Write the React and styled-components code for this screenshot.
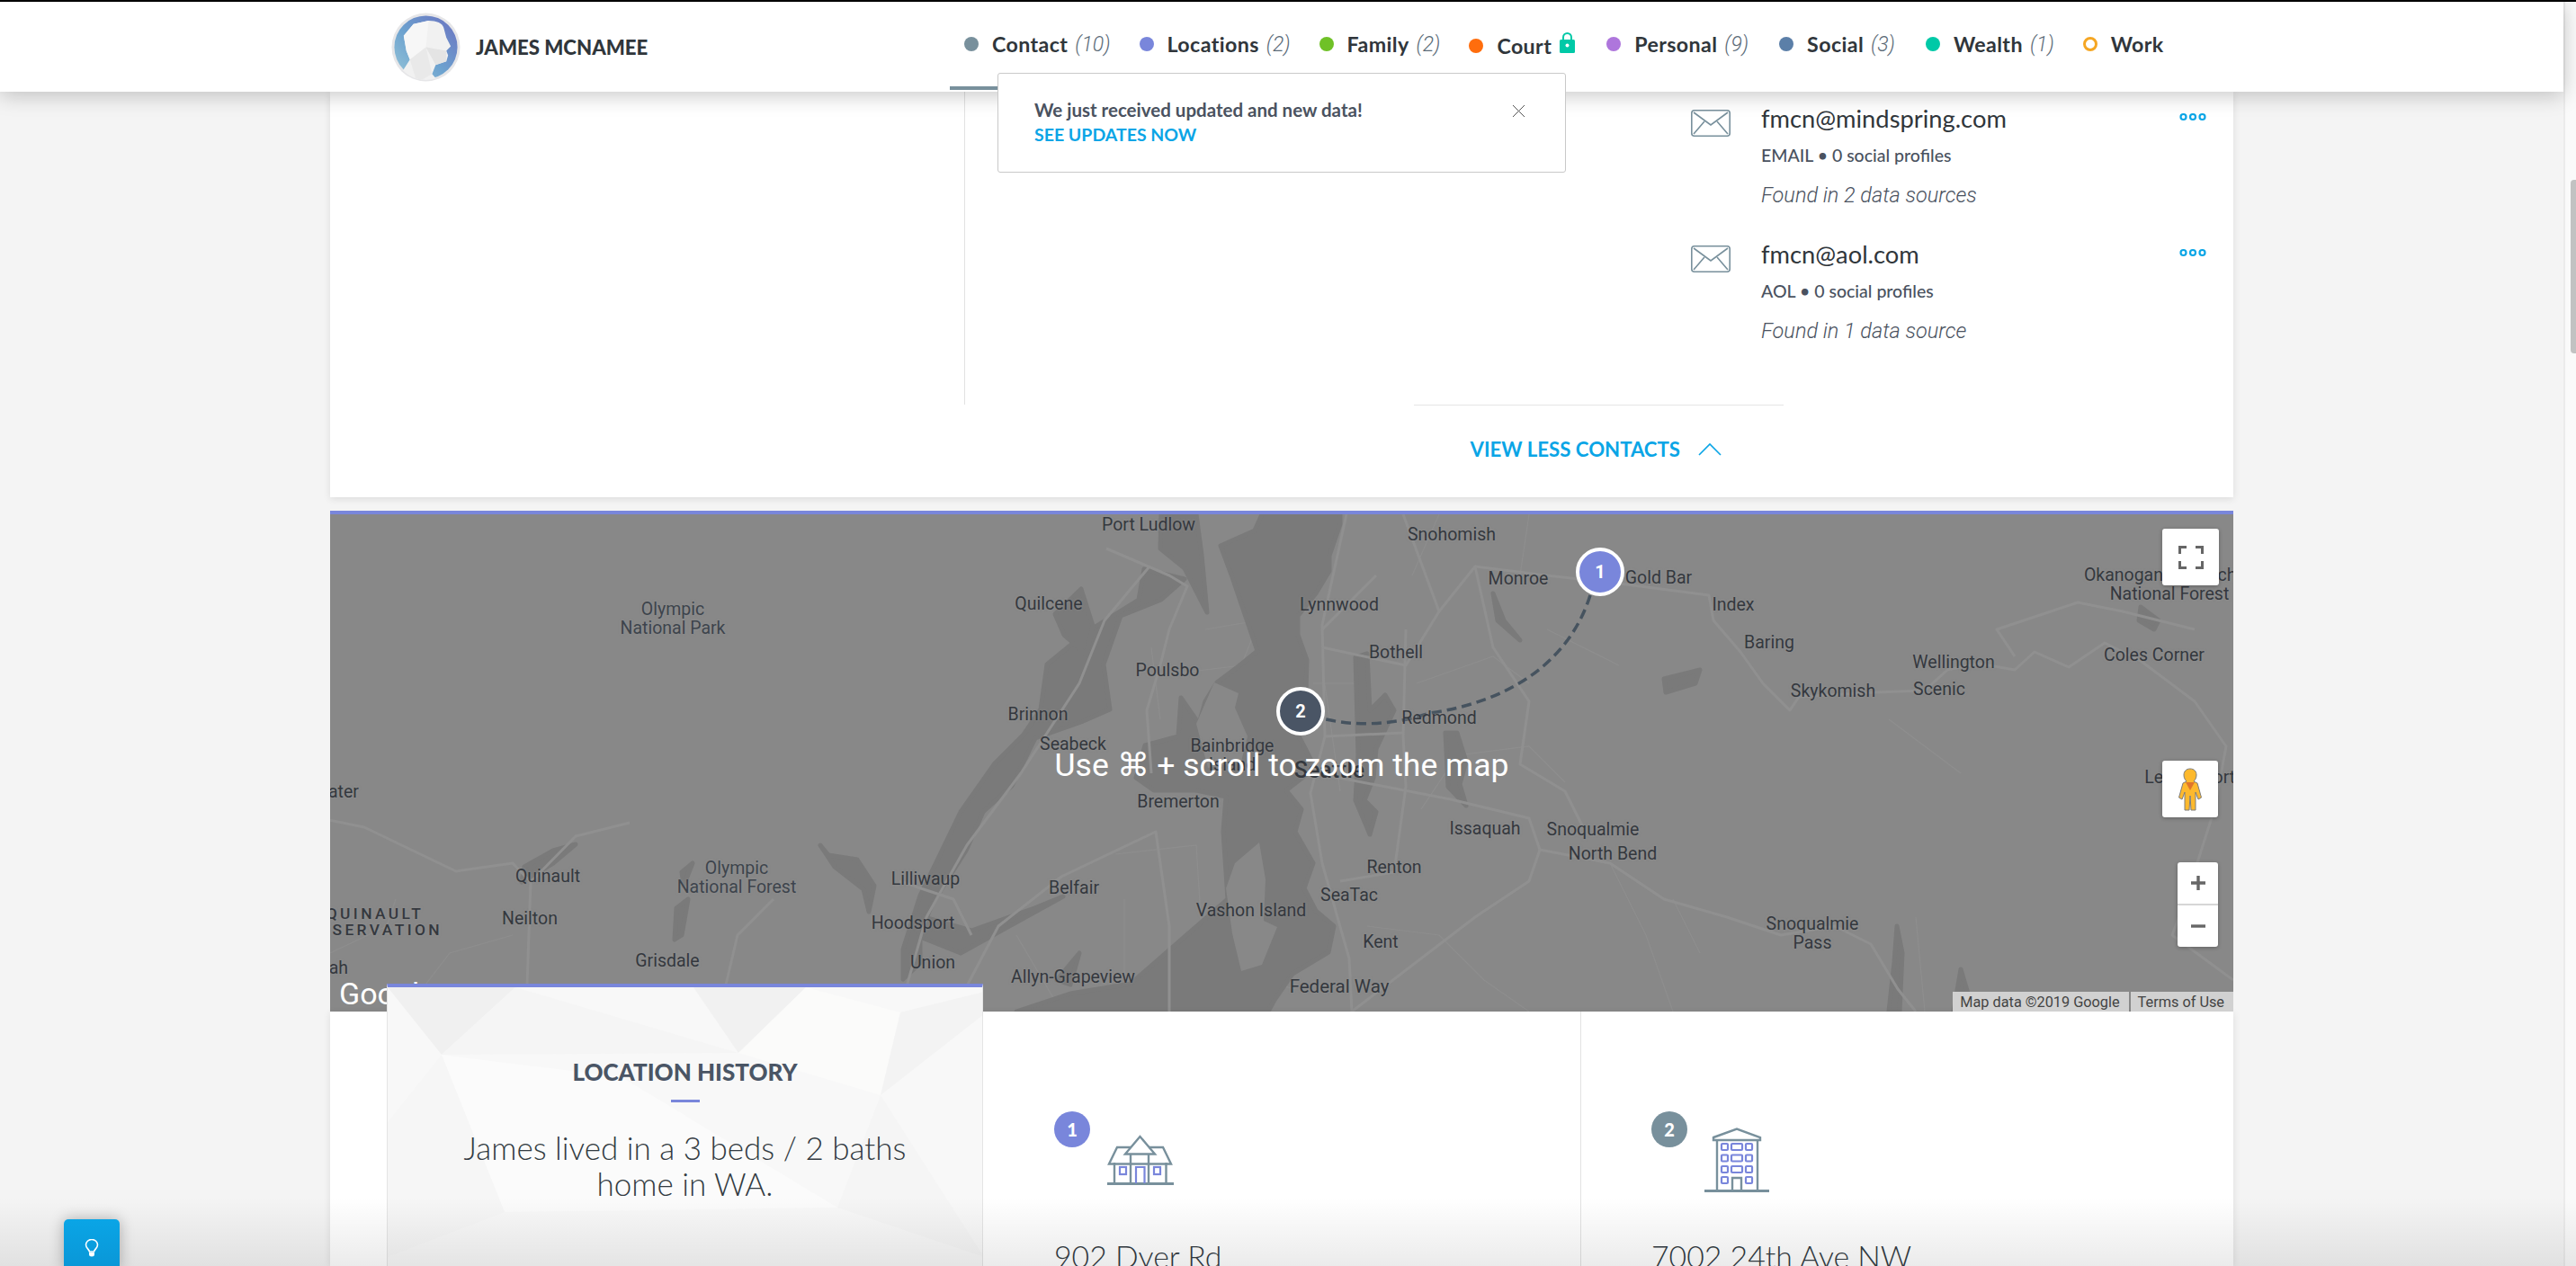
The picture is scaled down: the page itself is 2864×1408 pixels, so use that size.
import React from "react";
import styled, { createGlobalStyle } from "styled-components";

const BLUE = "#0aa5e6";
const PERI = "#7986db";
const SLATE = "#78909c";
const UI = '"Lato", "Liberation Sans", sans-serif';
const MAPF = '"Roboto", "Liberation Sans", sans-serif';
const MAP_X = 367;
const MAP_Y = 572;

const Global = createGlobalStyle`
  html, body { margin: 0; padding: 0; overflow: hidden; background: #f4f4f4; }
  * { box-sizing: border-box; }
`;

const Page = styled.div`
  position: relative;
  height: 100vh;
  display: flex;
  flex-direction: column;
  overflow: hidden;
  font-family: ${UI};
  color: #333b42;
  background: #f4f4f4;
`;
const BlackBar = styled.div`
  height: 2px;
  flex: none;
  background: #000;
`;
const Viewport = styled.div`
  flex: 1;
  min-height: 0;
  display: flex;
`;
const Main = styled.div`
  flex: 1;
  min-width: 0;
  display: flex;
  flex-direction: column;
`;
const ScrollTrack = styled.div`
  width: 14px;
  flex: none;
  background: #fafafa;
  border-left: 2px solid #ebebeb;
  padding: 198px 0 0 6px;
`;
const ScrollThumb = styled.div`
  height: 193px;
  background: #c2c2c2;
  border-radius: 4px 0 0 4px;
`;

const Header = styled.header`
  position: relative;
  z-index: 10;
  flex: none;
  height: 100px;
  display: flex;
  padding-left: 434px;
  background: #fff;
  box-shadow: 0 4px 22px rgba(0, 0, 0, 0.22);
`;
const Brand = styled.div`
  width: 622px;
  flex: none;
  display: flex;
  align-items: center;
  gap: 16px;
`;
const Name = styled.div`
  font-size: 22.2px;
  font-weight: 900;
  color: #30363b;
  white-space: nowrap;
`;
const Nav = styled.nav`
  display: flex;
  height: 98px;
`;
const NavItem = styled.div`
  display: flex;
  align-items: center;
  padding: ${(p) => (p.$low ? "4px" : "0")} 16px 0;
  margin-right: ${(p) => p.$extra || 0}px;
  border-bottom: 4px solid ${(p) => (p.$active ? SLATE : "transparent")};
  white-space: nowrap;
`;
const Dot = styled.span`
  width: 16px;
  height: 16px;
  border-radius: 50%;
  margin-right: 15px;
  flex: none;
  background: ${(p) => (p.$ring ? "transparent" : p.$color)};
  border: ${(p) => (p.$ring ? `3px solid ${p.$color}` : "0")};
`;
const NavLabel = styled.span`
  font-size: 23.2px;
  font-weight: 700;
  letter-spacing: 0.4px;
  color: #30363b;
`;
const NavCount = styled.span`
  font-family: ${MAPF};
  font-style: italic;
  font-weight: 300;
  font-size: 23px;
  color: #5b6b78;
  margin-left: 8px;
`;
const LockBox = styled.span`
  display: flex;
  margin: -8px 0 0 9px;
`;

const Toast = styled.div`
  position: absolute;
  left: 1109px;
  top: 79px;
  width: 632px;
  height: 111px;
  padding: 26px 0 0 40px;
  background: #fff;
  border: 1px solid #c9c9c9;
  border-radius: 3px;
  z-index: 12;
`;
const ToastTitle = styled.div`
  font-size: 20.5px;
  font-weight: 700;
  line-height: 28px;
  color: #4a5260;
`;
const ToastLink = styled.div`
  font-size: 19.5px;
  font-weight: 700;
  line-height: 28px;
  color: ${BLUE};
`;
const ToastClose = styled.svg`
  position: absolute;
  right: 44px;
  top: 34px;
`;

const Content = styled.div`
  flex: 1;
  min-height: 0;
  padding: 0 367px;
  display: flex;
  flex-direction: column;
`;
const ContactCard = styled.section`
  flex: none;
  height: 451px;
  margin-bottom: 15px;
  background: #fff;
  box-shadow: 0 2px 8px rgba(0, 0, 0, 0.1);
`;
const ContactBody = styled.div`
  height: 348px;
  margin-left: 705px;
  padding: 20px 30px 0 807px;
  border-left: 1px solid #e2e2e2;
`;
const EmailRow = styled.div`
  display: grid;
  grid-template-columns: 78px 1fr 30px;
  height: 151px;
`;
const EmailInfo = styled.div`
  display: flex;
  flex-direction: column;
`;
const EmailAddress = styled.div`
  font-size: 27.3px;
  font-weight: 400;
  line-height: 30px;
  margin-top: -5px;
  color: #30363b;
`;
const EmailMeta = styled.div`
  font-size: 19.5px;
  font-weight: 500;
  line-height: 24px;
  margin-top: 14px;
  color: #4a5260;
`;
const EmailSource = styled.div`
  font-family: ${MAPF};
  font-size: 23.5px;
  font-style: italic;
  font-weight: 300;
  line-height: 28px;
  margin-top: 18px;
  color: #4a5260;
`;
const MoreDots = styled.svg`
  margin-top: 3px;
`;
const CardFooter = styled.div`
  width: 411px;
  margin-left: 1205px;
  border-top: 1px solid #e6e6e6;
  padding-top: 18px;
  display: flex;
  align-items: center;
  justify-content: flex-end;
  padding-right: 69px;
  gap: 20px;
  height: 80px;
`;
const ViewLess = styled.div`
  font-size: 22.2px;
  font-weight: 700;
  line-height: 26px;
  color: ${BLUE};
  white-space: nowrap;
`;

const MapSection = styled.section`
  position: relative;
  flex: none;
  height: 557px;
  border-top: 4px solid ${PERI};
  background: #888;
  overflow: hidden;
`;
const MapArt = styled.svg`
  position: absolute;
  left: 0;
  top: 0;
  display: block;
`;
const MapLabel = styled.div`
  position: absolute;
  left: ${(p) => p.$x - MAP_X}px;
  top: ${(p) => p.$y - MAP_Y}px;
  transform: translate(-50%, -50%);
  font-family: ${MAPF};
  font-size: ${(p) => p.$size || 19.5}px;
  font-weight: ${(p) => p.$weight || 400};
  letter-spacing: ${(p) => p.$spacing || 0}px;
  line-height: ${(p) => p.$lh || 21}px;
  color: ${(p) => p.$color || "#34383e"};
  text-align: center;
  white-space: nowrap;
  text-shadow: 0 0 3px rgba(150, 150, 150, 0.7);
`;
const ScrollHint = styled.div`
  position: absolute;
  left: 0;
  right: 0;
  top: 260px;
  text-align: center;
  font-family: ${MAPF};
  font-size: 35.5px;
  line-height: 38px;
  color: #fff;
  z-index: 3;
`;
const Pin = styled.div`
  position: absolute;
  left: ${(p) => p.$x - MAP_X - 27}px;
  top: ${(p) => p.$y - MAP_Y - 27}px;
  width: 54px;
  height: 54px;
  border-radius: 50%;
  border: 4px solid #fff;
  background: ${(p) => p.$color};
  color: #fff;
  font-family: ${MAPF};
  font-weight: 700;
  font-size: 20px;
  display: flex;
  align-items: center;
  justify-content: center;
  z-index: 2;
`;
const ControlBox = styled.div`
  position: absolute;
  right: ${(p) => p.$right}px;
  top: ${(p) => p.$top}px;
  width: ${(p) => p.$w}px;
  height: ${(p) => p.$h}px;
  background: #fff;
  border-radius: 3px;
  box-shadow: 0 1px 4px rgba(0, 0, 0, 0.3);
  display: flex;
  flex-direction: column;
  align-items: center;
  justify-content: center;
  z-index: 4;
`;
const ZoomButton = styled.div`
  flex: 1;
  width: 100%;
  display: flex;
  align-items: center;
  justify-content: center;
  border-top: ${(p) => (p.$divided ? "2px solid #d6d6d6" : "0")};
`;
const Attribution = styled.div`
  position: absolute;
  right: 0;
  bottom: 0;
  height: 22px;
  display: flex;
  gap: 2px;
  font-family: ${MAPF};
  font-size: 16.3px;
  line-height: 24px;
  color: #444;
  z-index: 4;
`;
const AttrCell = styled.div`
  padding: 0 ${(p) => p.$pr}px 0 8px;
  background: #d1d1d1;
`;
const GoogleMark = styled.div`
  position: absolute;
  left: 10px;
  bottom: 2px;
  font-family: ${MAPF};
  font-size: 34px;
  line-height: 36px;
  font-weight: 400;
  color: #fff;
  z-index: 1;
`;

const Locations = styled.section`
  position: relative;
  flex: 1;
  min-height: 0;
  display: grid;
  grid-template-columns: 726px 664px 726px;
  background: #fff;
  box-shadow: 0 2px 8px rgba(0, 0, 0, 0.1);
`;
const HistoryCard = styled.div`
  position: relative;
  z-index: 5;
  margin: -31px 0 0 63px;
  height: 400px;
  border-top: 4px solid ${PERI};
  border-left: 1px solid #e4e4e4;
  border-right: 1px solid #e4e4e4;
  background: #f8f8f8;
  padding-top: 79px;
  text-align: center;
  overflow: hidden;
`;
const HistoryArt = styled.svg`
  position: absolute;
  left: 0;
  top: 0;
`;
const HistoryTitle = styled.h2`
  position: relative;
  margin: 0;
  font-size: 26px;
  font-weight: 900;
  line-height: 30px;
  color: #4a5565;
`;
const HistoryRule = styled.div`
  position: relative;
  width: 32px;
  height: 3px;
  margin: 16px auto 30px;
  background: ${PERI};
`;
const HistoryText = styled.p`
  position: relative;
  margin: 0;
  font-size: 35px;
  font-weight: 300;
  line-height: 40px;
  color: #333b42;
`;
const LocationItem = styled.div`
  padding: 111px 0 0 ${(p) => p.$pad}px;
  border-left: ${(p) => (p.$divided ? "1px solid #e2e2e2" : "0")};
`;
const IconRow = styled.div`
  display: flex;
  height: 90px;
  margin-bottom: 51px;
  gap: ${(p) => p.$gap}px;
`;
const Badge = styled.div`
  width: 40px;
  height: 40px;
  border-radius: 50%;
  flex: none;
  background: ${(p) => p.$color};
  color: #fff;
  font-weight: 900;
  font-size: 20px;
  display: flex;
  align-items: center;
  justify-content: center;
`;
const BuildingIcon = styled.svg`
  margin-top: ${(p) => p.$top}px;
  flex: none;
`;
const Address = styled.div`
  font-size: 33.8px;
  font-weight: 300;
  line-height: 40px;
  color: #333b42;
  white-space: nowrap;
`;
const Fade = styled.div`
  position: absolute;
  left: 0;
  right: 0;
  bottom: 0;
  height: 76px;
  background: linear-gradient(rgba(0, 0, 0, 0), rgba(0, 0, 0, 0.08));
  z-index: 20;
  pointer-events: none;
`;
const HelpButton = styled.div`
  position: absolute;
  left: 71px;
  bottom: -4px;
  width: 62px;
  height: 56px;
  border-radius: 5px 5px 0 0;
  background: linear-gradient(#0aa5e6, #0a96d6);
  box-shadow: 0 0 16px rgba(0, 0, 0, 0.28);
  z-index: 21;
  display: flex;
  justify-content: center;
  padding-top: 22px;
`;

const Avatar = () => (
  <svg width="79" height="79" viewBox="0 0 80 80" style={{ flex: "none" }}>
    <defs>
      <linearGradient id="av" x1="0" y1="1" x2="1" y2="0">
        <stop offset="0" stopColor="#97c6d8" />
        <stop offset="0.45" stopColor="#6da2cf" />
        <stop offset="1" stopColor="#6a70c0" />
      </linearGradient>
      <clipPath id="avc"><circle cx="40" cy="40" r="37" /></clipPath>
    </defs>
    <circle cx="40" cy="40" r="38.5" fill="#e6e6e8" />
    <circle cx="40" cy="40" r="35.5" fill="url(#av)" />
    <g clipPath="url(#avc)">
      <path d="M43 10 C52 10 59 13 60 18 L63 29 L68 39 L63 44 L65 49 L63 56 L51 60 L47 70 L52 76 L48 82 L22 82 L13 68 L22 54 L18 44 L15 27 L26 14 Z" fill="#f1f1f1" />
      <path d="M43 10 L40 40 L22 54 L18 44 L15 27 L26 14 Z" fill="#f7f7f7" />
      <path d="M40 40 L63 44 L63 56 L51 60 Z" fill="#e4e4e4" />
      <path d="M22 54 L40 40 L47 70 L30 80 Z" fill="#e9e9e9" />
    </g>
  </svg>
);
const Lock = () => (
  <svg width="17" height="23" viewBox="0 0 17 23">
    <path d="M4 9 V5.5 a4.5 4.5 0 0 1 9 0 V9" fill="none" stroke="#00c9a7" strokeWidth="2" />
    <rect x="0" y="8" width="17" height="15" rx="1.5" fill="#00c9a7" />
    <circle cx="8.5" cy="14.5" r="2" fill="#fff" />
  </svg>
);
const Envelope = () => (
  <svg width="44" height="30" viewBox="0 0 44 30" fill="none" stroke={SLATE} strokeWidth="1.6">
    <rect x="0.8" y="0.8" width="42.4" height="28.4" rx="3" />
    <path d="M3 3 L22 17 L41 3" />
    <path d="M3 27 L15 13 M41 27 L29 13" />
  </svg>
);
const Ellipsis = () => (
  <MoreDots width="30" height="10" viewBox="0 0 30 10" fill="none" stroke={BLUE} strokeWidth="2.2">
    <circle cx="4.5" cy="5" r="3" />
    <circle cx="15" cy="5" r="3" />
    <circle cx="25.5" cy="5" r="3" />
  </MoreDots>
);
const House = () => (
  <BuildingIcon $top={26} width="74" height="56" viewBox="0 0 74 56" fill="none" stroke={SLATE} strokeWidth="2.4">
    <path d="M0 54.5 H74" strokeWidth="3" />
    <path d="M8 31 V54 M65.5 31 V54 M26 22 V54 M46 22 V54" />
    <path d="M26 14 H11 L2 32.5 H71 L62 14 H46" />
    <path d="M36.5 2 L20 21.5 H53 Z" />
    <g stroke={PERI} strokeWidth="2.2">
      <rect x="14" y="36" width="7" height="8" />
      <rect x="52" y="36" width="7" height="8" />
      <path d="M32 54 V36 H41.5 V54" />
    </g>
  </BuildingIcon>
);
const Building = () => {
  const xs = [[19, 7], [30, 12], [46, 7]];
  const ys = [18, 30.5, 43, 55];
  return (
    <BuildingIcon $top={18} width="72" height="72" viewBox="0 0 72 72" fill="none" stroke={SLATE} strokeWidth="2.4">
      <path d="M0 70.5 H72" strokeWidth="3" />
      <path d="M10 11 L36 1.5 L62 11 V14 H10 Z" />
      <path d="M14 14 V70 M59 14 V70" />
      <path d="M31 70 V56 H41 V70" />
      <g stroke={PERI} strokeWidth="2.2">
        {ys.map((y, r) =>
          xs.map(([x, w], c) =>
            r === 3 && c === 1 ? null : <rect key={`${r}${c}`} x={x} y={y} width={w} height="7" rx="1" />
          )
        )}
      </g>
    </BuildingIcon>
  );
};

const pts = (a) => a.map(([x, y]) => `${x},${y}`).join(" ");
const water = [
  [[1403,572],[1490,572],[1490,583],[1478,618],[1478,635],[1463,660],[1443,685],[1443,706],[1453,734],[1452,770],[1437,805],[1457,844],[1457,858],[1430,879],[1447,900],[1440,925],[1460,960],[1450,988],[1463,1013],[1483,1030],[1477,1059],[1437,1083],[1417,1112],[1410,1125],[1130,1125],[1190,1105],[1257,1094],[1310,1048],[1365,1000],[1360,925],[1363,886],[1330,879],[1283,879],[1263,865],[1273,829],[1310,819],[1313,776],[1333,805],[1340,780],[1353,759],[1377,741],[1398,724],[1387,692],[1370,642],[1357,607],[1395,590]],
  [[1317,644],[1291,667],[1246,685],[1227,739],[1234,789],[1202,803],[1151,821],[1125,874],[1093,903],[1074,946],[1036,1006],[1023,1040],[1023,1071],[1004,1089],[1004,1056],[1023,996],[1068,903],[1106,849],[1138,817],[1157,789],[1164,739],[1208,703],[1266,667],[1272,633]],
  [[1173,683],[1202,655],[1215,696],[1208,728],[1183,706]],
  [[1291,572],[1330,572],[1336,617],[1342,681],[1317,632],[1290,610]],
  [[1023,1042],[1068,1060],[1182,997],[1150,1010],[1080,1035],[1017,1017]],
  [[912,940],[921,951],[953,956],[972,985],[966,1014],[960,989],[928,964]],
  [[583,964],[615,946],[640,939],[615,960],[580,981]],
  [[1507,731],[1520,727],[1523,790],[1540,773],[1550,790],[1530,833],[1527,865],[1517,890],[1530,903],[1523,928],[1507,890],[1510,840]],
  [[1607,815],[1620,815],[1630,847],[1623,872],[1630,896],[1610,875]],
  [[1660,660],[1672,690],[1690,712],[1665,690]],
  [[1850,755],[1890,745],[1885,760],[1852,770]],
  [[1175,1090],[1200,1060],[1190,1095]],
  [[758,970],[770,960],[760,985]],
  [[752,1010],[765,1000],[758,1040],[750,1045]],
  [[2180,1078],[2188,1105],[2186,1125],[2172,1125]],
  [[2109,1030],[2115,1060],[2112,1125],[2100,1125],[2106,1070]],
  [[2380,675],[2400,690],[2395,700],[2378,690]],
];
const land = [
  [[1400,937],[1407,978],[1405,1024],[1420,1031],[1403,1073],[1380,1080],[1370,1038],[1363,988],[1373,960]],
  [[1330,805],[1350,759],[1377,771],[1373,787],[1387,819],[1380,847],[1343,854]],
];
const roads = [
  "M1497 572 L1470 695 L1473 819 L1457 882 L1470 960 L1500 1066 L1503 1125",
  "M1563 700 L1560 819 L1563 875 L1550 970 L1490 980",
  "M1473 819 L1560 815 M1463 860 L1613 889 L1700 910 L1712 945 L1790 960 L1850 1000 L1920 1020 L1980 1040 L2040 1030 L2080 1050 L2110 1100 L2130 1125",
  "M1640 630 L1720 640 L1808 650 L1900 662 L1905 690 L1935 725 L1960 760 L1990 790 L2000 775 L2084 770 L2140 768 L2165 745 L2200 738 L2240 745 L2262 725 L2300 742 L2340 715 L2380 735 L2440 780 L2475 830 L2462 900 L2430 1000 L2415 1040 L2483 1090",
  "M1278 630 L1228 690 L1200 760 L1135 860 L1075 940 L1030 1020 L1000 1125",
  "M366 912 L405 920 L507 969 L570 960 L590 981 L585 1125",
  "M590 981 L640 930 L700 915",
  "M1230 610 L1300 640 L1320 652 L1300 700 L1290 740 L1275 790 L1280 860",
  "M1300 1125 L1300 1030 L1285 925 L1180 975 L1110 1030 L1060 1125",
  "M1503 1125 L1640 1020 L1700 980 L1712 945",
  "M1560 572 L1600 680 L1640 630 L1660 720 L1700 780 L1690 850 L1740 880 L1760 920",
  "M1530 640 L1470 700 M1600 680 L1563 740 L1470 720",
  "M2240 730 L2220 700 L2310 670 L2360 680 L2440 700",
  "M800 1125 L820 1040 L860 1000 M1080 1040 L1060 1000 L1000 980",
];
const smallRoads = [
  "M1340 700 L1400 690 L1380 740 L1300 750 M1280 720 L1290 800 M1240 950 L1330 940 L1340 1100 M1250 1000 L1250 1125 M1130 1040 L1180 1125",
  "M1460 760 L1510 760 M1470 740 L1490 880 M1575 760 L1660 730 L1700 760 M1580 900 L1620 840 L1700 830 L1740 870",
  "M1420 940 L1430 1030 M1400 1090 L1440 1100 M1520 1030 L1600 1040 L1650 1090 L1700 1125",
  "M1600 572 L1570 640 M1700 572 L1690 640 M1720 700 L1800 740 M2130 1020 L2140 1125 M1860 1000 L1890 1060 M450 1125 L500 1060 L570 1040",
  "M367 1060 L430 1030 L440 1000 M2100 800 L2180 860 M1790 960 L1830 1040 L1860 1125",
];

const labels = [
  { x: 1277, y: 583, t: "Port Ludlow" }, { x: 1166, y: 671, t: "Quilcene" }, { x: 748, y: 688, t: ["Olympic", "National Park"], c: "#3d444c" },
  { x: 1298, y: 745, t: "Poulsbo" }, { x: 1154, y: 794, t: "Brinnon" }, { x: 1193, y: 827, t: "Seabeck" },
  { x: 1370, y: 840, t: ["Bainbridge", "Island"] }, { x: 1478, y: 856, t: "Seattle", s: 25, w: 500 }, { x: 1310, y: 891, t: "Bremerton" },
  { x: 352, y: 880, t: "Clearwater" }, { x: 609, y: 974, t: "Quinault" }, { x: 819, y: 976, t: ["Olympic", "National Forest"], c: "#3d444c" },
  { x: 1029, y: 977, t: "Lilliwaup" }, { x: 1194, y: 987, t: "Belfair" }, { x: 1391, y: 1012, t: "Vashon Island" },
  { x: 417, y: 1025, t: ["QUINAULT", "RESERVATION"], s: 17.4, sp: 3.4, lh: 18, w: 500 }, { x: 589, y: 1021, t: "Neilton" }, { x: 1015, y: 1026, t: "Hoodsport" },
  { x: 350, y: 1076, t: "Wishkah" }, { x: 742, y: 1068, t: "Grisdale" }, { x: 1037, y: 1070, t: "Union" }, { x: 1193, y: 1086, t: "Allyn-Grapeview" },
  { x: 1614, y: 594, t: "Snohomish" }, { x: 1688, y: 643, t: "Monroe" }, { x: 1844, y: 642, t: "Gold Bar" }, { x: 1489, y: 672, t: "Lynnwood" },
  { x: 1927, y: 672, t: "Index" }, { x: 1552, y: 725, t: "Bothell" }, { x: 1967, y: 714, t: "Baring" }, { x: 2172, y: 736, t: "Wellington" },
  { x: 2156, y: 766, t: "Scenic" }, { x: 2038, y: 768, t: "Skykomish" }, { x: 1600, y: 798, t: "Redmond" }, { x: 1651, y: 921, t: "Issaquah" },
  { x: 1771, y: 922, t: "Snoqualmie" }, { x: 1793, y: 949, t: "North Bend" }, { x: 1550, y: 964, t: "Renton" }, { x: 1500, y: 995, t: "SeaTac" },
  { x: 1535, y: 1047, t: "Kent" }, { x: 1489, y: 1097, t: "Federal Way", s: 20.5 }, { x: 2015, y: 1038, t: ["Snoqualmie", "Pass"] },
  { x: 2412, y: 650, t: ["Okanogan-Wenatchee", "National Forest"] }, { x: 2395, y: 728, t: "Coles Corner" }, { x: 2440, y: 864, t: "Leavenworth" },
];

const nav = [
  { l: "Contact", n: "(10)", c: SLATE, active: true },
  { l: "Locations", n: "(2)", c: PERI },
  { l: "Family", n: "(2)", c: "#6fc127" },
  { l: "Court", c: "#ff6d0d", lock: true, low: true, extra: 3 },
  { l: "Personal", n: "(9)", c: "#ae76dc", extra: 2 },
  { l: "Social", n: "(3)", c: "#5b7fa8", extra: 2 },
  { l: "Wealth", n: "(1)", c: "#00c9a7" },
  { l: "Work", c: "#f5a623", ring: true },
];

const emails = [
  { a: "fmcn@mindspring.com", k: "EMAIL", s: "Found in 2 data sources" },
  { a: "fmcn@aol.com", k: "AOL", s: "Found in 1 data source" },
];

export default function App() {
  return (
    <Page>
      <Global />
      <BlackBar />
      <Viewport>
        <Main>
          <Header>
            <Brand>
              <Avatar />
              <Name>JAMES MCNAMEE</Name>
            </Brand>
            <Nav>
              {nav.map((i) => (
                <NavItem key={i.l} $active={i.active} $low={i.low} $extra={i.extra}>
                  <Dot $color={i.c} $ring={i.ring} />
                  <NavLabel>{i.l}</NavLabel>
                  {i.n && <NavCount>{i.n}</NavCount>}
                  {i.lock && <LockBox><Lock /></LockBox>}
                </NavItem>
              ))}
            </Nav>
            <Toast>
              <ToastTitle>We just received updated and new data!</ToastTitle>
              <ToastLink>SEE UPDATES NOW</ToastLink>
              <ToastClose width="15" height="15" viewBox="0 0 15 15" stroke="#555" strokeWidth="1" fill="none">
                <path d="M1 1 L14 14 M14 1 L1 14" />
              </ToastClose>
            </Toast>
          </Header>
          <Content>
            <ContactCard>
              <ContactBody>
                {emails.map((e) => (
                  <EmailRow key={e.a}>
                    <Envelope />
                    <EmailInfo>
                      <EmailAddress>{e.a}</EmailAddress>
                      <EmailMeta>{e.k} • 0 social profiles</EmailMeta>
                      <EmailSource>{e.s}</EmailSource>
                    </EmailInfo>
                    <Ellipsis />
                  </EmailRow>
                ))}
              </ContactBody>
              <CardFooter>
                <ViewLess>VIEW LESS CONTACTS</ViewLess>
                <svg width="26" height="16" viewBox="0 0 26 16" fill="none" stroke={BLUE} strokeWidth="1.6">
                  <path d="M1 14 L13 2 L25 14" />
                </svg>
              </CardFooter>
            </ContactCard>

            <MapSection>
              <MapArt width="2116" height="553" viewBox={`${MAP_X} ${MAP_Y} 2116 553`}>
                <g fill="none" stroke="#8e8e8e" strokeWidth="1.2">
                  {smallRoads.map((d) => <path key={d} d={d} />)}
                </g>
                <g stroke="#7a7a7a" strokeWidth="5" strokeLinejoin="round">
                  {water.map((p) => <polygon key={p[0].join()} points={pts(p)} fill="#7a7a7a" />)}
                </g>
                {land.map((p) => <polygon key={p[0].join()} points={pts(p)} fill="#888" />)}
                <g fill="none" stroke="#909090" strokeWidth="3" strokeLinejoin="round">
                  {roads.map((d) => <path key={d} d={d} />)}
                </g>
                <path
                  d="M1768 662 C1745 735 1680 780 1590 793 C1550 806 1510 808 1474 800"
                  fill="none"
                  stroke="#46535f"
                  strokeWidth="3.5"
                  strokeDasharray="11 6"
                />
              </MapArt>
              {labels.map((l) => (
                <MapLabel key={l.t} $x={l.x} $y={l.y} $size={l.s} $weight={l.w} $spacing={l.sp} $lh={l.lh} $color={l.c}>
                  {Array.isArray(l.t) ? l.t.map((x) => <div key={x}>{x}</div>) : l.t}
                </MapLabel>
              ))}
              <ScrollHint>Use ⌘ + scroll to zoom the map</ScrollHint>
              <Pin $x={1779} $y={636} $color={PERI}>1</Pin>
              <Pin $x={1446} $y={791} $color="#4a5565">2</Pin>
              <ControlBox $right={16} $top={16} $w={63} $h={63}>
                <svg width="28" height="26" viewBox="0 0 28 26" fill="none" stroke="#666" strokeWidth="3">
                  <path d="M1.5 9 V1.5 H9 M19 1.5 H26.5 V9 M26.5 17 V24.5 H19 M9 24.5 H1.5 V17" />
                </svg>
              </ControlBox>
              <ControlBox $right={17} $top={274} $w={62} $h={63}>
                <svg width="26" height="48" viewBox="0 0 26 48">
                  <path d="M13 1 C17.5 1 20 4 20 8 C20 11 18.5 13.5 17 15 L21 17 L25.5 33 L22 35 L19 27 L19 47 L14 47 L13 31 L12 47 L7 47 L7 27 L4 35 L0.5 33 L5 17 L9 15 C7.5 13.5 6 11 6 8 C6 4 8.5 1 13 1 Z" fill="#fdb92d" stroke="#7c7c7c" strokeWidth="1" />
                  <path d="M8 16 H18 L13 25 Z" fill="#e0762b" />
                </svg>
              </ControlBox>
              <ControlBox $right={17} $top={387} $w={45} $h={94}>
                <ZoomButton>
                  <svg width="18" height="18" viewBox="0 0 18 18" stroke="#666" strokeWidth="3.4"><path d="M9 1 V17 M1 9 H17" /></svg>
                </ZoomButton>
                <ZoomButton $divided>
                  <svg width="18" height="18" viewBox="0 0 18 18" stroke="#666" strokeWidth="3.4"><path d="M1 9 H17" /></svg>
                </ZoomButton>
              </ControlBox>
              <GoogleMark>Google</GoogleMark>
              <Attribution>
                <AttrCell $pr={10}>Map data ©2019 Google</AttrCell>
                <AttrCell $pr={10}>Terms of Use</AttrCell>
              </Attribution>
            </MapSection>

            <Locations>
              <HistoryCard>
                <HistoryArt width="663" height="400" viewBox="0 0 663 400">
                  <polygon points="0,0 142,0 60,75 " fill="#f0f0f0" />
                  <polygon points="142,0 390,73 60,75" fill="#f5f5f5" />
                  <polygon points="340,0 465,0 390,73" fill="#f1f1f1" />
                  <polygon points="465,0 570,28 548,120 390,73" fill="#fbfbfa" />
                  <polygon points="570,28 663,5 663,30 548,120" fill="#f3f3f3" />
                  <polygon points="60,75 260,100 500,245 130,250" fill="#fbfbfb" />
                  <polygon points="0,150 60,75 130,250 0,300" fill="#f6f6f6" />
                  <polygon points="548,120 663,300 500,245" fill="#f5f5f5" />
                </HistoryArt>
                <HistoryTitle>LOCATION HISTORY</HistoryTitle>
                <HistoryRule />
                <HistoryText>James lived in a 3 beds / 2 baths<br />home in WA.</HistoryText>
              </HistoryCard>
              <LocationItem $pad={79}>
                <IconRow $gap={19}>
                  <Badge $color={PERI}>1</Badge>
                  <House />
                </IconRow>
                <Address>902 Dyer Rd</Address>
              </LocationItem>
              <LocationItem $pad={78} $divided>
                <IconRow $gap={19}>
                  <Badge $color={SLATE}>2</Badge>
                  <Building />
                </IconRow>
                <Address>7002 24th Ave NW</Address>
              </LocationItem>
            </Locations>
          </Content>
        </Main>
        <ScrollTrack><ScrollThumb /></ScrollTrack>
      </Viewport>
      <Fade />
      <HelpButton>
        <svg width="16" height="20" viewBox="0 0 16 20" fill="none" stroke="#fff" strokeWidth="1.6">
          <path d="M5.5 14 C5 11.5 1.5 10 1.5 6.5 A6.5 6 0 0 1 14.5 6.5 C14.5 10 11 11.5 10.5 14 Z" />
          <path d="M5 15 H11 V17 A3 2.5 0 0 1 5 17 Z" fill="#fff" stroke="none" />
        </svg>
      </HelpButton>
    </Page>
  );
}
